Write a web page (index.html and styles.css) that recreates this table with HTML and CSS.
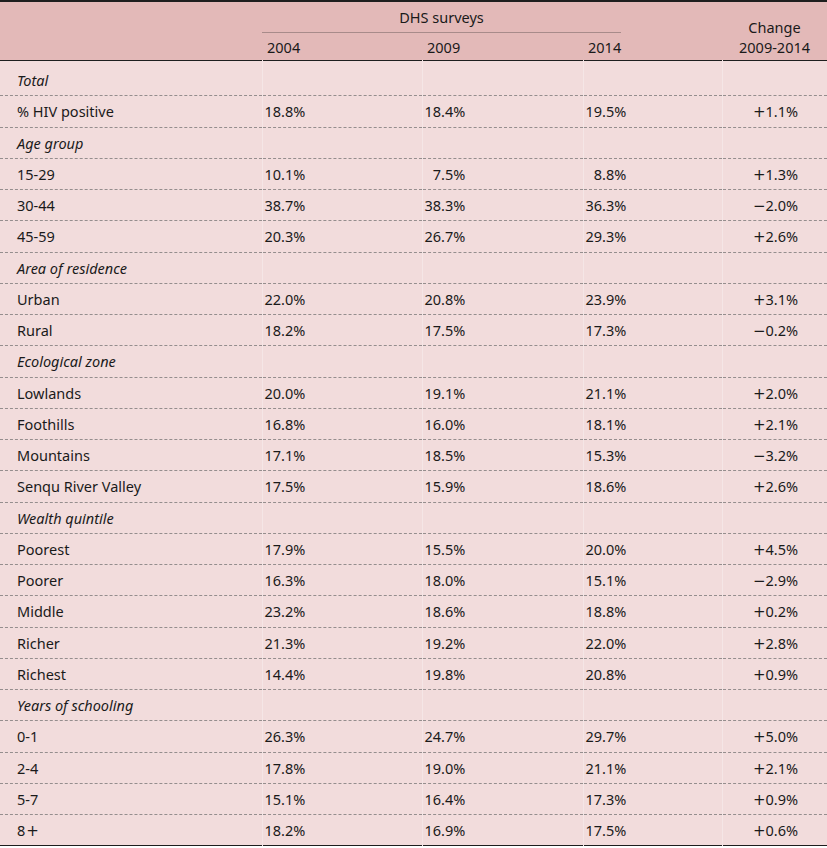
FILE: index.html
```html
<!DOCTYPE html>
<html>
<head>
<meta charset="utf-8">
<link rel="stylesheet" href="styles.css">
</head>
<body>
<table class="tbl">
  <colgroup>
    <col class="c-label"><col class="c-y"><col class="c-y2"><col class="c-y3"><col class="c-ch">
  </colgroup>
  <thead>
    <tr class="h1">
      <th></th>
      <th colspan="3" class="span"><div class="span-in">DHS surveys</div></th>
      <th rowspan="2" class="ch-h">Change<br>2009-2014</th>
    </tr>
    <tr class="h2">
      <th></th>
      <th class="yr">2004</th>
      <th class="yr">2009</th>
      <th class="yr">2014</th>
    </tr>
  </thead>
  <tbody>
    <tr class="grp first"><td>Total</td><td></td><td></td><td></td><td></td></tr>
    <tr><td>% HIV positive</td><td>18.8%</td><td>18.4%</td><td>19.5%</td><td class="ch"><span class="sg">+</span>1.1%</td></tr>
    <tr class="grp"><td>Age group</td><td></td><td></td><td></td><td></td></tr>
    <tr><td>15-29</td><td>10.1%</td><td>&#8199;7.5%</td><td>&#8199;8.8%</td><td class="ch"><span class="sg">+</span>1.3%</td></tr>
    <tr><td>30-44</td><td>38.7%</td><td>38.3%</td><td>36.3%</td><td class="ch"><span class="sg">&minus;</span>2.0%</td></tr>
    <tr><td>45-59</td><td>20.3%</td><td>26.7%</td><td>29.3%</td><td class="ch"><span class="sg">+</span>2.6%</td></tr>
    <tr class="grp"><td>Area of residence</td><td></td><td></td><td></td><td></td></tr>
    <tr><td>Urban</td><td>22.0%</td><td>20.8%</td><td>23.9%</td><td class="ch"><span class="sg">+</span>3.1%</td></tr>
    <tr><td>Rural</td><td>18.2%</td><td>17.5%</td><td>17.3%</td><td class="ch"><span class="sg">&minus;</span>0.2%</td></tr>
    <tr class="grp"><td>Ecological zone</td><td></td><td></td><td></td><td></td></tr>
    <tr><td>Lowlands</td><td>20.0%</td><td>19.1%</td><td>21.1%</td><td class="ch"><span class="sg">+</span>2.0%</td></tr>
    <tr><td>Foothills</td><td>16.8%</td><td>16.0%</td><td>18.1%</td><td class="ch"><span class="sg">+</span>2.1%</td></tr>
    <tr><td>Mountains</td><td>17.1%</td><td>18.5%</td><td>15.3%</td><td class="ch"><span class="sg">&minus;</span>3.2%</td></tr>
    <tr><td>Senqu River Valley</td><td>17.5%</td><td>15.9%</td><td>18.6%</td><td class="ch"><span class="sg">+</span>2.6%</td></tr>
    <tr class="grp"><td>Wealth quintile</td><td></td><td></td><td></td><td></td></tr>
    <tr><td>Poorest</td><td>17.9%</td><td>15.5%</td><td>20.0%</td><td class="ch"><span class="sg">+</span>4.5%</td></tr>
    <tr><td>Poorer</td><td>16.3%</td><td>18.0%</td><td>15.1%</td><td class="ch"><span class="sg">&minus;</span>2.9%</td></tr>
    <tr><td>Middle</td><td>23.2%</td><td>18.6%</td><td>18.8%</td><td class="ch"><span class="sg">+</span>0.2%</td></tr>
    <tr><td>Richer</td><td>21.3%</td><td>19.2%</td><td>22.0%</td><td class="ch"><span class="sg">+</span>2.8%</td></tr>
    <tr><td>Richest</td><td>14.4%</td><td>19.8%</td><td>20.8%</td><td class="ch"><span class="sg">+</span>0.9%</td></tr>
    <tr class="grp"><td>Years of schooling</td><td></td><td></td><td></td><td></td></tr>
    <tr><td>0-1</td><td>26.3%</td><td>24.7%</td><td>29.7%</td><td class="ch"><span class="sg">+</span>5.0%</td></tr>
    <tr><td>2-4</td><td>17.8%</td><td>19.0%</td><td>21.1%</td><td class="ch"><span class="sg">+</span>2.1%</td></tr>
    <tr><td>5-7</td><td>15.1%</td><td>16.4%</td><td>17.3%</td><td class="ch"><span class="sg">+</span>0.9%</td></tr>
    <tr class="last"><td>8<span class="sg sg-s">+</span></td><td>18.2%</td><td>16.9%</td><td>17.5%</td><td class="ch"><span class="sg">+</span>0.6%</td></tr>
  </tbody>
</table>
</body>
</html>
```
FILE: styles.css
```css
html, body {
  margin: 0;
  padding: 0;
  background: #ffffff;
}
.tbl {
  width: 827px;
  border-collapse: collapse;
  table-layout: fixed;
  font-family: "Noto Sans", Lato, sans-serif;
  font-size: 14.5px;
  color: #1a1a1a;
  border-top: 2px solid #1e1e1e;
  border-bottom: 1px solid #1e1e1e;
}
.c-label { width: 262px; }
.c-y { width: 160px; }
.c-y2 { width: 161px; }
.c-y3 { width: 139px; }
.c-ch { width: 105px; }
thead th {
  background: #e3b9b8;
  font-weight: normal;
  padding: 0;
}
.h1 th { height: 31px; }
.h2 th { height: 27px; }
.h2 { border-bottom: 1px solid #1e1e1e; }
.span { text-align: center; vertical-align: bottom; }
.span-in {
  margin-right: 101px;
  padding-bottom: 5px;
  border-bottom: 1px solid #a88b8a;
  text-align: center;
}
.yr { text-align: left; padding-left: 5px !important; vertical-align: middle; }
.ch-h {
  text-align: center;
  line-height: 20px;
  padding: 12px 0 0 0 !important;
  vertical-align: middle;
}
tbody td {
  background: #f2dcdc;
  height: 30.25px;
  padding: 0 0 0 2px;
  border-bottom: 1px dashed #958e8e;
  border-left: 1px solid #f5e6e6;
  vertical-align: middle;
  white-space: nowrap;
}
tbody tr.first td {
  padding-top: 4px;
}
tbody td:first-child {
  padding-left: 17px;
  border-left: none;
}
tbody tr.last td { border-bottom: none; }
tbody .grp td:first-child { font-style: italic; }
tbody td.ch {
  text-align: right;
  padding-right: 29px;
  padding-left: 0;
}
.sg {
  font-family: "DejaVu Sans", sans-serif;
  font-size: 15px;
}
.sg-s {
  margin-left: 1px;
}
```
